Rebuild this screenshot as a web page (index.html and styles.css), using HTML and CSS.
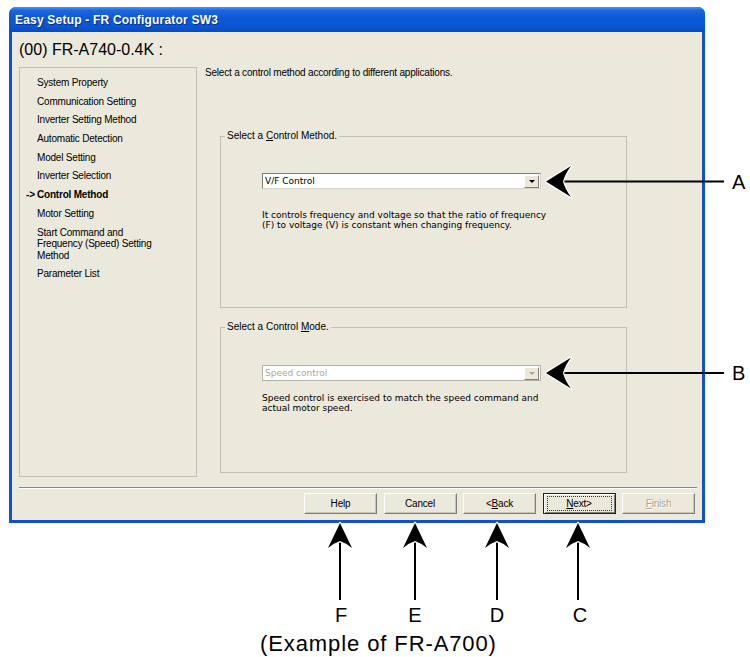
FILE: index.html
```html
<!DOCTYPE html>
<html lang="en">
<head>
    <meta charset="UTF-8">
    <title>Easy Setup - FR Configurator SW3</title>
    <link rel="stylesheet" href="styles.css">
</head>
<body>
<div class="figure">
    <div class="window">
        <div class="titlebar">Easy Setup - FR Configurator SW3</div>
        <div class="client">
            <div class="model">(00) FR-A740-0.4K :</div>
            <div class="main">
                <ul class="steps">
                    <li>System Property</li>
                    <li>Communication Setting</li>
                    <li>Inverter Setting Method</li>
                    <li>Automatic Detection</li>
                    <li>Model Setting</li>
                    <li>Inverter Selection</li>
                    <li class="current"><span class="mark">-&gt;</span>Control Method</li>
                    <li>Motor Setting</li>
                    <li>Start Command and<br>Frequency (Speed) Setting<br>Method</li>
                    <li>Parameter List</li>
                </ul>
                <div class="page">
                    <p class="intro">Select a control method according to different applications.</p>
                    <div class="group g-method">
                        <div class="legend">Select a <u>C</u>ontrol Method.</div>
                        <div class="combo"><span>V/F Control</span><span class="drop"></span></div>
                        <p class="desc">It controls frequency and voltage so that the ratio of frequency<br>(F) to voltage (V) is constant when changing frequency.</p>
                    </div>
                    <div class="group g-mode">
                        <div class="legend">Select a Control <u>M</u>ode.</div>
                        <div class="combo off"><span>Speed control</span><span class="drop"></span></div>
                        <p class="desc">Speed control is exercised to match the speed command and<br>actual motor speed.</p>
                    </div>
                </div>
            </div>
            <div class="sep"></div>
            <div class="buttons">
                <button>Help</button>
                <button>Cancel</button>
                <button>&lt;<u>B</u>ack</button>
                <button class="default"><span><u>N</u>ext&gt;</span></button>
                <button class="off"><u>F</u>inish</button>
            </div>
        </div>
    </div>
    <p class="caption">(Example of FR-A700)</p>
    <svg class="callouts" width="750" height="657" viewBox="0 0 750 657">
        <g class="lines">
            <path d="M562 181.5H724"/>
            <path d="M562 373H724"/>
            <path d="M340 540V600"/>
            <path d="M415 540V600"/>
            <path d="M497 540V600"/>
            <path d="M578 540V600"/>
        </g>
        <g class="heads">
            <path d="M546 181.5L571 166Q565 174 563 181.5Q565 189 571 197Z"/>
            <path d="M546 373L571 357.5Q565 365.5 563 373Q565 380.5 571 388.5Z"/>
            <path d="M340 523L352 548Q346 543 340 541Q334 543 328 548Z"/>
            <path d="M415 523L427 548Q421 543 415 541Q409 543 403 548Z"/>
            <path d="M497 523L509 548Q503 543 497 541Q491 543 485 548Z"/>
            <path d="M578 523L590 548Q584 543 578 541Q572 543 566 548Z"/>
        </g>
        <g class="letters">
            <text x="732" y="189">A</text>
            <text x="732" y="380">B</text>
            <text x="341" y="622" text-anchor="middle">F</text>
            <text x="415" y="622" text-anchor="middle">E</text>
            <text x="497" y="622" text-anchor="middle">D</text>
            <text x="580" y="622" text-anchor="middle">C</text>
        </g>
    </svg>
</div>
</body>
</html>
```
FILE: styles.css
```css
* {
    box-sizing: border-box;
}
body {
    margin: 0;
    background: #fff;
    font-family: "Liberation Sans", Arial, sans-serif;
    color: #000;
}
p, ul {
    margin: 0;
    padding: 0;
}
.figure {
    position: relative;
    width: 750px;
    height: 657px;
    padding-top: 7px;
}
.window {
    width: 696px;
    margin-left: 9px;
    padding: 0 3px 3px;
    background: #1250cc;
    border-radius: 7px 7px 0 0;
}
.titlebar {
    height: 25px;
    margin: 0 -3px;
    padding-left: 6px;
    line-height: 26px;
    font-size: 12px;
    font-weight: bold;
    letter-spacing: 0.2px;
    color: #fff;
    text-shadow: 1px 1px #0b2f86;
    background: linear-gradient(#4a95f4 0%, #1a67df 14%, #0c58d4 45%, #0a55d2 80%, #0a4bbd 100%);
    border-radius: 7px 7px 0 0;
}
.client {
    background: #ebe8dc;
    padding: 9px 5px 6px 7px;
}
.model {
    height: 18px;
    line-height: 18px;
    font-size: 16px;
}
.main {
    display: flex;
    margin-top: 8px;
}
.steps {
    list-style: none;
    width: 178px;
    height: 410px;
    border: 1px solid #c2c0b4;
    padding: 9px 0 0 17px;
    display: flex;
    flex-direction: column;
    gap: 7.2px;
    font-size: 10px;
    line-height: 11.5px;
    letter-spacing: -0.2px;
}
.steps .current {
    font-weight: bold;
}
.mark {
    display: inline-block;
    width: 11px;
    margin-left: -11px;
}
.page {
    margin-left: 8px;
}
.intro {
    font-size: 10px;
    line-height: 11px;
    letter-spacing: -0.2px;
}
.group {
    width: 407px;
    margin-left: 15px;
    border: 1px solid #c2c0b4;
    padding-left: 4px;
}
.g-method {
    margin-top: 58px;
    height: 172px;
}
.g-mode {
    margin-top: 19px;
    height: 146px;
}
.legend {
    width: fit-content;
    margin-top: -7px;
    padding: 0 2px;
    background: #ebe8dc;
    font-size: 10px;
    line-height: 12px;
}
.combo {
    display: flex;
    align-items: center;
    justify-content: space-between;
    width: 279px;
    height: 16px;
    margin: 31px 0 0 37px;
    padding: 0 1px 0 2px;
    background: #fff;
    border: 1px solid;
    border-color: #7c7c7c #d6d4ca #d6d4ca #7c7c7c;
    font-family: "DejaVu Sans", sans-serif;
    font-size: 9px;
}
.g-mode .combo {
    margin-top: 32px;
}
.drop {
    position: relative;
    width: 15px;
    height: 13px;
    background: #ece9d8;
    border: 1px solid;
    border-color: #fff #808080 #808080 #fff;
}
.drop::after {
    content: "";
    position: absolute;
    left: 4px;
    top: 4px;
    border-style: solid;
    border-width: 3px 3px 0;
    border-color: #000 transparent transparent;
}
.combo.off {
    color: #a8a698;
    border-color: #b4b2a8;
}
.combo.off .drop::after {
    border-top-color: #a8a698;
}
.desc {
    margin: 21px 0 0 37px;
    font-family: "DejaVu Sans", sans-serif;
    font-size: 9px;
    line-height: 10px;
}
.g-mode .desc {
    margin-top: 12px;
}
.sep {
    height: 2px;
    margin-top: 10px;
    border-top: 1px solid #8a887f;
    border-bottom: 1px solid #fff;
}
.buttons {
    display: flex;
    justify-content: flex-end;
    gap: 6.5px;
    margin-top: 4px;
    padding-right: 2px;
}
.buttons button {
    width: 73px;
    height: 21px;
    padding: 0;
    background: #ebe8dc;
    border: 1px solid;
    border-color: #fff #7e7e7e #7e7e7e #fff;
    box-shadow: inset -1px -1px #c9c6b8;
    font-family: "Liberation Sans", Arial, sans-serif;
    font-size: 10px;
    letter-spacing: -0.2px;
    color: #000;
}
.buttons .default {
    border-color: #222;
    box-shadow: inset 1px 1px #fff, inset -1px -1px #7e7e7e;
}
.buttons .default span {
    display: block;
    margin: 0 3px;
    line-height: 13px;
    border: 1px dotted #333;
}
.buttons .off {
    color: #aca899;
    text-shadow: 1px 1px #fff;
}
.caption {
    margin: 109px 0 0 260px;
    font-size: 22px;
    line-height: 24px;
    letter-spacing: 0.9px;
}
.callouts {
    position: absolute;
    left: 0;
    top: 0;
    pointer-events: none;
}
.lines path {
    fill: none;
    stroke: #000;
    stroke-width: 2;
}
.heads path {
    fill: #000;
    stroke: #fff;
    stroke-width: 2.5;
    stroke-linejoin: round;
    paint-order: stroke;
}
.letters text {
    font-family: "Liberation Sans", Arial, sans-serif;
    font-size: 20px;
    fill: #000;
}
```
